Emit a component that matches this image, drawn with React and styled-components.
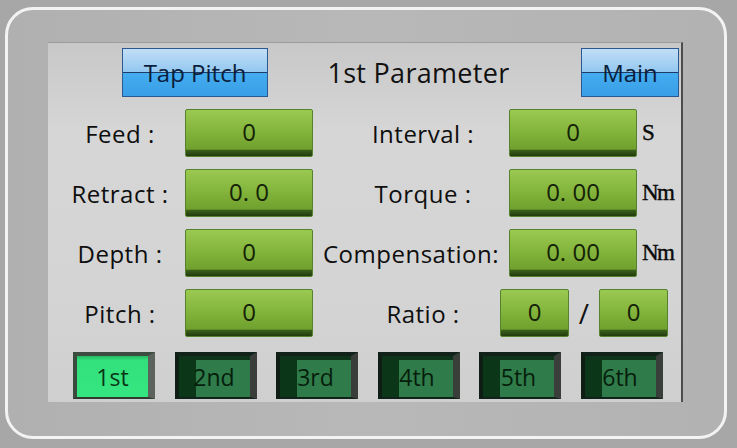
import styled, { createGlobalStyle, css } from "styled-components";

const GlobalStyle = createGlobalStyle`
  html, body {
    margin: 0;
    padding: 0;
    background: #a7a7a7;
  }
  body {
    width: 737px;
    height: 448px;
    overflow: hidden;
    font-family: "Open Sans", "Noto Sans", sans-serif;
  }
`;

const leftRows = [
  { label: "Feed :", value: "0" },
  { label: "Retract :", value: "0. 0" },
  { label: "Depth :", value: "0" },
  { label: "Pitch :", value: "0" },
];

const rightRows = [
  { label: "Interval :", value: "0", unit: "S" },
  { label: "Torque :", value: "0. 00", unit: "Nm" },
  { label: "Compensation:", value: "0. 00", unit: "Nm", wide: true },
];

const tabs = ["1st", "2nd", "3rd", "4th", "5th", "6th"];

export default function App() {
  return (
    <>
      <GlobalStyle />
      <Frame>
        <Screen>
          <Header>
            <BlueButton $width={146}>Tap Pitch</BlueButton>
            <Title>1st Parameter</Title>
            <BlueButton $width={98}>Main</BlueButton>
          </Header>

          <Rows>
            {leftRows.map((left, i) => {
              const right = rightRows[i];
              return (
                <Row key={left.label}>
                  <Label $width={120}>{left.label}</Label>
                  <ValueBox $width={128}>{left.value}</ValueBox>
                  {right ? (
                    <>
                      <Label $width={196} $pad={right.wide ? 0 : 24}>
                        {right.label}
                      </Label>
                      <ValueBox $width={128}>{right.value}</ValueBox>
                      <Unit>{right.unit}</Unit>
                    </>
                  ) : (
                    <>
                      <Label $width={187} $pad={33}>
                        Ratio :
                      </Label>
                      <ValueBox $width={69}>0</ValueBox>
                      <Slash>/</Slash>
                      <ValueBox $width={69}>0</ValueBox>
                    </>
                  )}
                </Row>
              );
            })}
          </Rows>

          <TabBar>
            {tabs.map((t, i) => (
              <Tab key={t} $active={i === 0}>
                {t}
              </Tab>
            ))}
          </TabBar>
        </Screen>
      </Frame>
    </>
  );
}

const Frame = styled.div`
  box-sizing: border-box;
  margin: 7px 0 0 5px;
  width: 722px;
  height: 432px;
  border: 3px solid #f3f3f3;
  border-radius: 28px;
  background: linear-gradient(to right, #b0b0b0, #b8b8b8 50%, #b2b2b2);
  padding: 32px 0 0 40px;
`;

const Screen = styled.div`
  box-sizing: border-box;
  width: 635px;
  height: 360px;
  border-top: 1px solid #9c9c9c;
  border-right: 2px solid #4c4c4c;
  background: linear-gradient(to bottom, #c8c8c8, #d6d6d6 25%, #d4d4d4 70%, #cfcfcf);
  display: flex;
  flex-direction: column;
`;

const Header = styled.div`
  display: flex;
  align-items: center;
  height: 49px;
  margin-top: 5px;
  padding: 0 2px 0 74px;
`;

const Title = styled.div`
  flex: 1;
  text-align: center;
  margin-right: 12px;
  font-size: 27px;
  letter-spacing: 0.3px;
  color: #111;
`;

const BlueButton = styled.div`
  box-sizing: border-box;
  width: ${(p) => p.$width}px;
  height: 49px;
  display: flex;
  align-items: center;
  justify-content: center;
  border: 1px solid #2b5890;
  background: linear-gradient(
    to bottom,
    #c2def6 0%,
    #94c8f0 48%,
    #1d3b66 48%,
    #1d3b66 52%,
    #44acf0 52%,
    #3a9fe6 100%
  );
  font-size: 24px;
  color: #0b1f3d;
`;

const Rows = styled.div`
  display: flex;
  flex-direction: column;
  gap: 12px;
  margin-top: 12px;
  padding-left: 12px;
`;

const Row = styled.div`
  display: flex;
  align-items: center;
  height: 48px;
`;

const Label = styled.div`
  box-sizing: border-box;
  width: ${(p) => p.$width}px;
  padding-left: ${(p) => p.$pad || 0}px;
  margin-right: ${(p) => (p.$width === 120 ? 5 : 0)}px;
  text-align: center;
  white-space: nowrap;
  font-size: 24px;
  letter-spacing: 0.5px;
  color: #0e0e0e;
`;

const ValueBox = styled.div`
  box-sizing: border-box;
  width: ${(p) => p.$width}px;
  height: 48px;
  display: flex;
  align-items: center;
  justify-content: center;
  padding-bottom: 3px;
  border: 1px solid #55822e;
  border-radius: 2px;
  background: linear-gradient(
    to bottom,
    #9bc952 0%,
    #84b53c 45%,
    #70a02e 85%,
    #3a5e1a 88%,
    #223c0e 100%
  );
  font-size: 24px;
  color: #142206;
`;

const Unit = styled.div`
  padding-left: 5px;
  font-family: "Liberation Serif", "DejaVu Serif", serif;
  font-size: 23px;
  letter-spacing: -1.5px;
  color: #0a0a0a;
  -webkit-text-stroke: 0.4px #0a0a0a;
`;

const Slash = styled.div`
  width: 30px;
  text-align: center;
  font-size: 28px;
  color: #111;
`;

const TabBar = styled.div`
  display: flex;
  gap: 19.5px;
  margin-top: 15px;
  padding-left: 25px;
`;

const Tab = styled.div`
  box-sizing: border-box;
  width: 82px;
  height: 47px;
  display: flex;
  align-items: center;
  justify-content: center;
  border-style: solid;
  border-width: 4px 7px 2px 4px;
  font-size: 23px;
  ${(p) =>
    p.$active
      ? css`
          border-color: #3c4c40 #5c625c #2e3a30 #3a4a3c;
          background: linear-gradient(to bottom, #25b862 0%, #33e07c 10%, #35e680 100%);
          color: #0a3517;
        `
      : css`
          border-color: #10221a #3a3e3a #10221a #0e1e14;
          background: linear-gradient(to right, #0b3718 0, #0b3718 17px, #2f7b49 17px);
          box-shadow: inset 0 4px 0 #0d3318;
          color: #061e0c;
        `}
`;
